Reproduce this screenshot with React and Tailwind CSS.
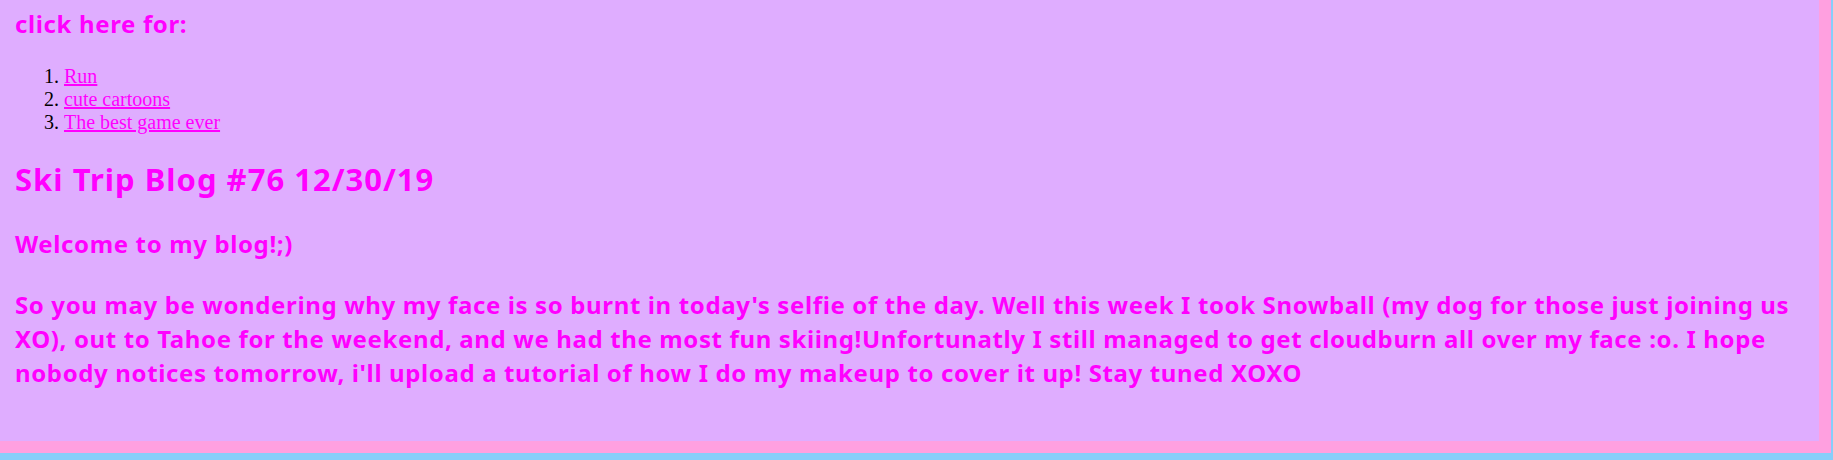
import React from 'react'

const links = [
  { label: 'Run', href: '#run' },
  { label: 'cute cartoons', href: '#cartoons' },
  { label: 'The best game ever', href: '#game' }
]

export default function App() {
  return (
    <div className="w-[1833px] h-[460px] bg-[#87cefa] overflow-hidden">
      <div className="w-[1831px] h-[453px] box-border bg-[#dfadff] border-r-[12px] border-b-[12px] border-[#ffa0e0] pt-[7px] pl-[15px] pr-[14px] text-[#ff00ff] font-['Noto_Sans',sans-serif] font-bold tracking-[0.63px]">
        {/* Links */}
        <h3 className="text-[24px] leading-[34px]">click here for:</h3>
        <ol className="mt-[24px] pl-[49px] list-decimal font-['Liberation_Serif',serif] font-normal tracking-normal text-[20px] leading-[23px] text-black">
          {links.map(link => (
            <li key={link.label}>
              <a href={link.href} className="text-[#ff00ff] underline">{link.label}</a>
            </li>
          ))}
        </ol>

        {/* Post */}
        <h1 className="mt-[25px] text-[31px] leading-[40px] tracking-[1px]">Ski Trip Blog #76 12/30/19</h1>
        <h2 className="mt-[28px] text-[24px] leading-[34px]">Welcome to my blog!;)</h2>
        <p className="mt-[27px] text-[24px] leading-[34px]">
          So you may be wondering why my face is so burnt in today's selfie of the day. Well this week I took Snowball (my dog for those just joining us XO), out to Tahoe for the weekend, and we had the most fun skiing!Unfortunatly I still managed to get cloudburn all over my face :o. I hope<br />
          nobody notices tomorrow, i'll upload a tutorial of how I do my makeup to cover it up! Stay tuned XOXO
        </p>
      </div>
    </div>
  )
}
